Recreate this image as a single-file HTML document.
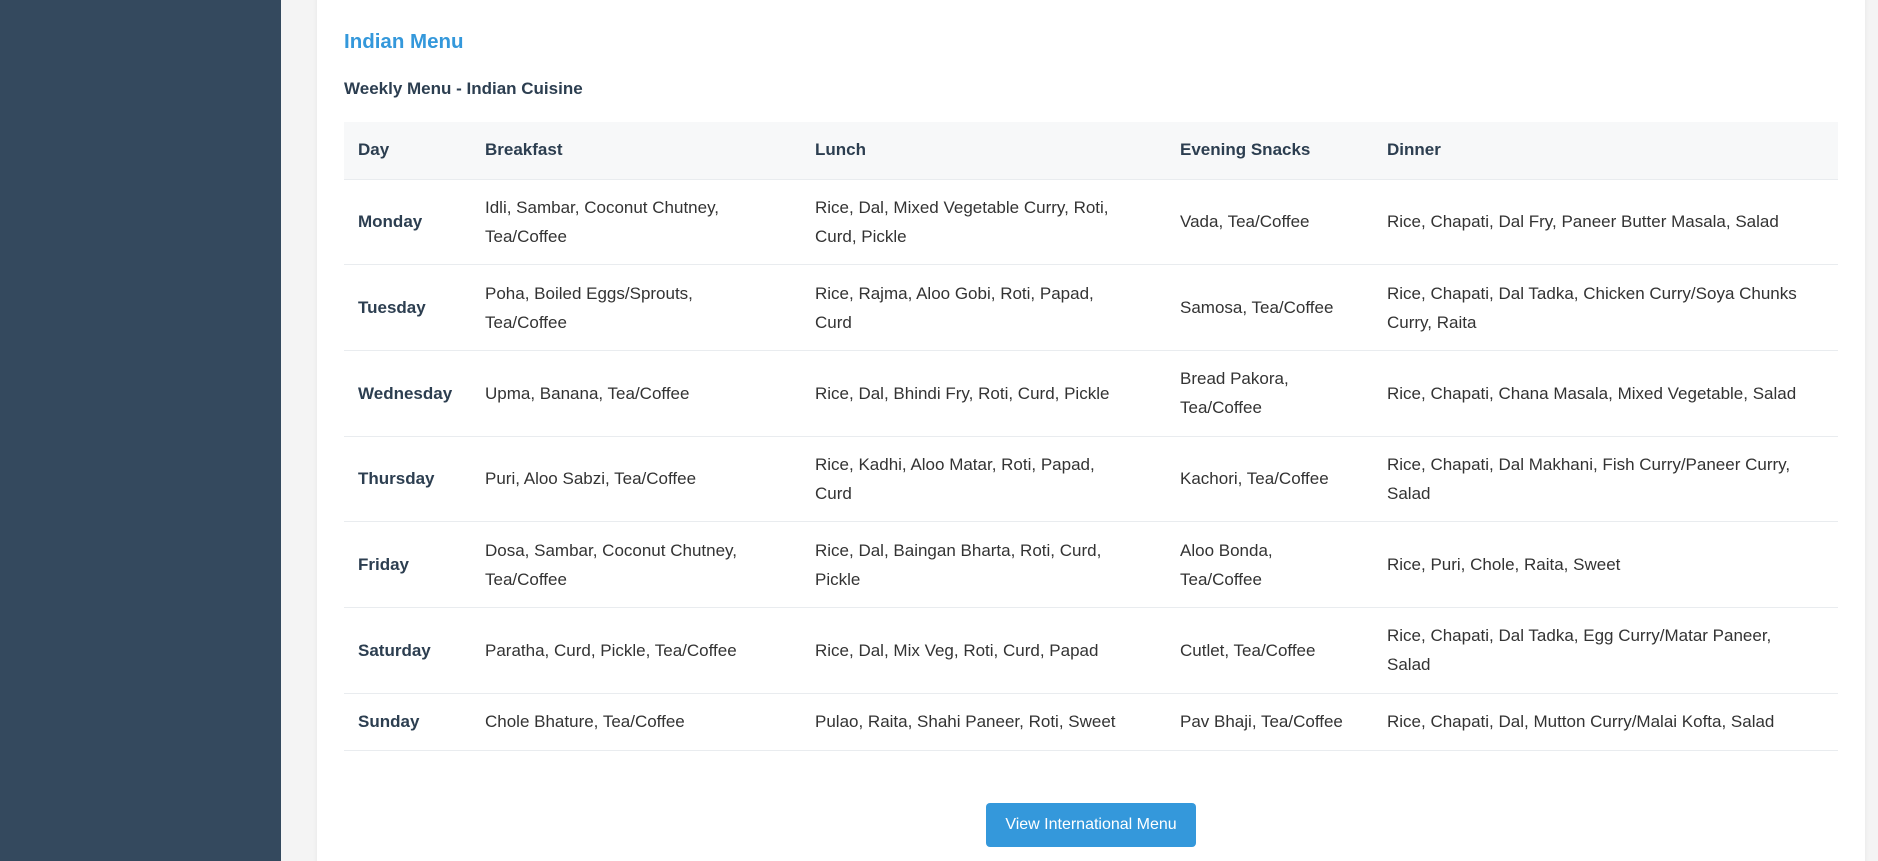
<!DOCTYPE html>
<html style="overflow:hidden;height:861px"><head><meta charset="utf-8"><style>
*{box-sizing:border-box;margin:0;padding:0}
body{width:1878px;height:861px;overflow:hidden;background:#f4f4f4;font-family:"Liberation Sans",Arial,sans-serif;position:relative}
.side{position:absolute;left:0;top:0;width:281px;height:861px;background:#34495e}
.card{position:absolute;left:317px;top:-10px;width:1548px;height:900px;background:#fff;border-radius:8px;box-shadow:0 0 6px rgba(0,0,0,.06);overflow:hidden}
h2{position:absolute;left:27px;top:40px;font-size:20.5px;color:#3498db;font-weight:bold}
h3{position:absolute;left:27px;top:89px;font-size:17px;color:#2c3e50;font-weight:bold}
table{position:absolute;left:27px;top:132px;width:1494px;border-collapse:collapse;font-size:17px;color:#333}
th{background:#f7f8f9;text-align:left;height:57px;color:#2c3e50;font-weight:bold;padding:0 14px;border-bottom:1px solid #e9ecef}
td{padding:0 14px;line-height:29px;border-bottom:1px solid #e9ecef;height:85.7px}
tr.last td{height:57px}
td:first-child{font-weight:bold;color:#2c3e50}
.btn{position:absolute;left:669px;top:813px;width:210px;height:44px;background:#3498db;color:#fff;border-radius:4px;font-size:16px;text-align:center;line-height:44px}
</style></head><body>
<div class="side"></div>
<div class="card">
<h2>Indian Menu</h2>
<h3>Weekly Menu - Indian Cuisine</h3>
<table>
<colgroup><col style="width:127px"><col style="width:330px"><col style="width:365px"><col style="width:207px"><col></colgroup>
<tr><th>Day</th><th>Breakfast</th><th>Lunch</th><th>Evening Snacks</th><th>Dinner</th></tr>
<tr><td>Monday</td><td>Idli, Sambar, Coconut Chutney,<br>Tea/Coffee</td><td>Rice, Dal, Mixed Vegetable Curry, Roti,<br>Curd, Pickle</td><td>Vada, Tea/Coffee</td><td>Rice, Chapati, Dal Fry, Paneer Butter Masala, Salad</td></tr>
<tr><td>Tuesday</td><td>Poha, Boiled Eggs/Sprouts,<br>Tea/Coffee</td><td>Rice, Rajma, Aloo Gobi, Roti, Papad,<br>Curd</td><td>Samosa, Tea/Coffee</td><td>Rice, Chapati, Dal Tadka, Chicken Curry/Soya Chunks<br>Curry, Raita</td></tr>
<tr><td>Wednesday</td><td>Upma, Banana, Tea/Coffee</td><td>Rice, Dal, Bhindi Fry, Roti, Curd, Pickle</td><td>Bread Pakora,<br>Tea/Coffee</td><td>Rice, Chapati, Chana Masala, Mixed Vegetable, Salad</td></tr>
<tr><td>Thursday</td><td>Puri, Aloo Sabzi, Tea/Coffee</td><td>Rice, Kadhi, Aloo Matar, Roti, Papad,<br>Curd</td><td>Kachori, Tea/Coffee</td><td>Rice, Chapati, Dal Makhani, Fish Curry/Paneer Curry,<br>Salad</td></tr>
<tr><td>Friday</td><td>Dosa, Sambar, Coconut Chutney,<br>Tea/Coffee</td><td>Rice, Dal, Baingan Bharta, Roti, Curd,<br>Pickle</td><td>Aloo Bonda,<br>Tea/Coffee</td><td>Rice, Puri, Chole, Raita, Sweet</td></tr>
<tr><td>Saturday</td><td>Paratha, Curd, Pickle, Tea/Coffee</td><td>Rice, Dal, Mix Veg, Roti, Curd, Papad</td><td>Cutlet, Tea/Coffee</td><td>Rice, Chapati, Dal Tadka, Egg Curry/Matar Paneer,<br>Salad</td></tr>
<tr class="last"><td>Sunday</td><td>Chole Bhature, Tea/Coffee</td><td>Pulao, Raita, Shahi Paneer, Roti, Sweet</td><td>Pav Bhaji, Tea/Coffee</td><td>Rice, Chapati, Dal, Mutton Curry/Malai Kofta, Salad</td></tr>
</table>
<div class="btn">View International Menu</div>
</div>
</body></html>
